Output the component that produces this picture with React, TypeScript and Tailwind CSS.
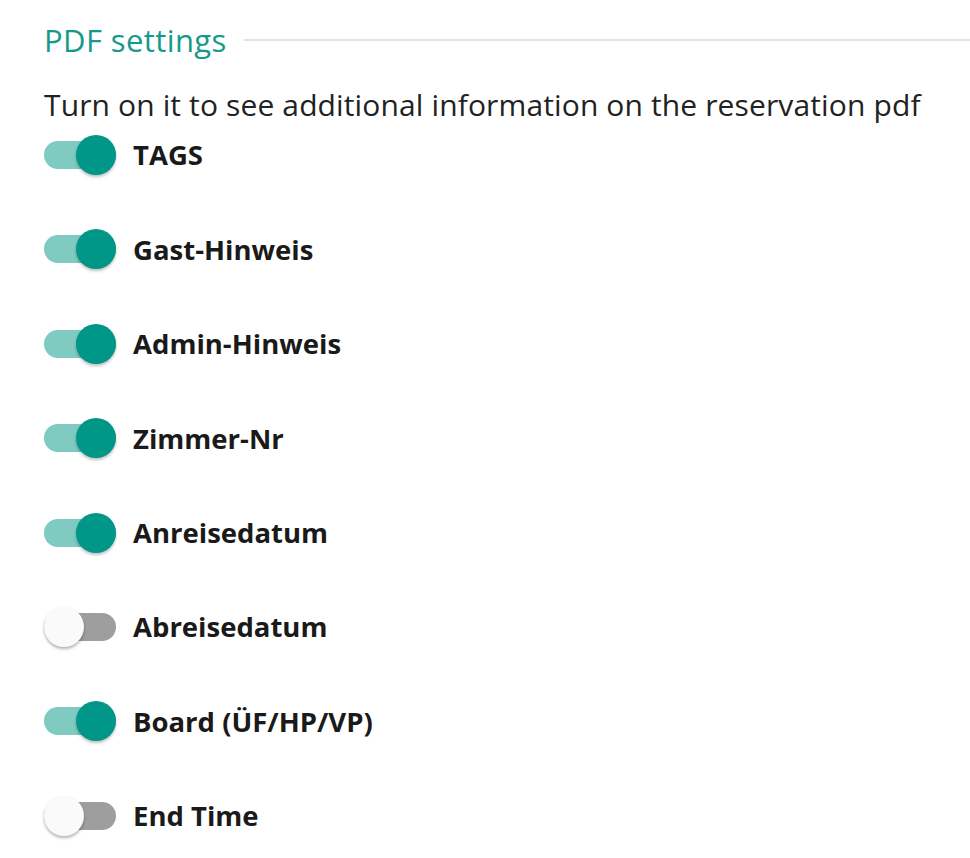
import { useState } from 'react';

type Option = { key: string; label: string; on: boolean };

const initialOptions: Option[] = [
  { key: 'tags', label: 'TAGS', on: true },
  { key: 'guestNote', label: 'Gast-Hinweis', on: true },
  { key: 'adminNote', label: 'Admin-Hinweis', on: true },
  { key: 'room', label: 'Zimmer-Nr', on: true },
  { key: 'arrival', label: 'Anreisedatum', on: true },
  { key: 'departure', label: 'Abreisedatum', on: false },
  { key: 'board', label: 'Board (ÜF/HP/VP)', on: true },
  { key: 'endTime', label: 'End Time', on: false },
];

function Toggle({ checked, onChange }: { checked: boolean; onChange: () => void }) {
  return (
    <button
      type="button"
      role="switch"
      aria-checked={checked}
      onClick={onChange}
      className="relative flex h-10 w-[72px] shrink-0 items-center"
    >
      <span
        className={
          checked
            ? 'h-7 w-full rounded-full bg-[#7fcac1]'
            : 'h-7 w-full rounded-full bg-[#9e9e9e]'
        }
      />
      <span
        className={
          checked
            ? 'absolute left-8 top-0 h-10 w-10 rounded-full bg-[#009688] shadow-[0_2px_3px_rgba(0,0,0,0.25)]'
            : 'absolute left-0 top-0 h-10 w-10 rounded-full bg-[#fafafa] shadow-[0_2px_3px_rgba(0,0,0,0.3)]'
        }
      />
    </button>
  );
}

export default function App() {
  const [options, setOptions] = useState(initialOptions);

  const flip = (key: string) =>
    setOptions((prev) => prev.map((o) => (o.key === key ? { ...o, on: !o.on } : o)));

  return (
    <div className="min-h-screen bg-white pl-[44px] font-['Open_Sans',sans-serif] text-[#212121]">
      {/* Section header */}
      <div className="flex h-[80px] items-center">
        <h2 className="text-[31px] font-normal leading-none tracking-[0.4px] text-[#16998a]">
          PDF settings
        </h2>
        <div className="ml-[17px] h-[2px] flex-1 bg-[#e4e4e4]" />
      </div>

      <p className="mt-[6px] text-[30px] leading-[38px] tracking-[0.13px] text-[#222]">
        Turn on it to see additional information on the reservation pdf
      </p>

      <div className="mt-[7px] flex flex-col gap-[46.4px]">
        {options.map((o) => (
          <div key={o.key} className="flex h-12 items-center gap-[17px]">
            <Toggle checked={o.on} onChange={() => flip(o.key)} />
            <span className="text-[27.5px] font-bold text-[#1a1a1a]">{o.label}</span>
          </div>
        ))}
      </div>
    </div>
  );
}
